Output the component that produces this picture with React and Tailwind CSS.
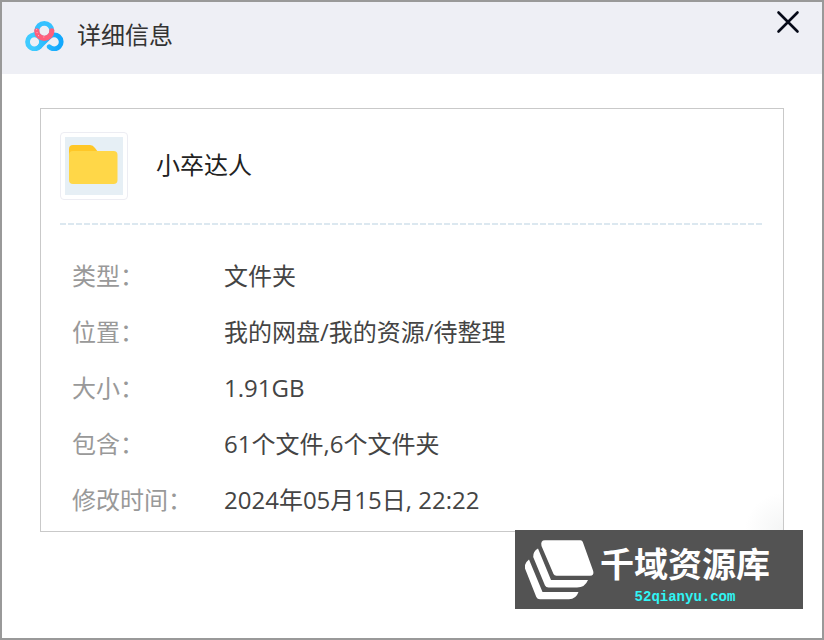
const details = [
  { label: "类型：", value: "文件夹" },
  { label: "位置：", value: "我的网盘/我的资源/待整理" },
  { label: "大小：", value: "1.91GB" },
  { label: "包含：", value: "61个文件,6个文件夹" },
  { label: "修改时间：", value: "2024年05月15日, 22:22" },
];

function CloudLogo() {
  return (
    <svg width="40" height="32" viewBox="0 0 40 32" fill="none" strokeWidth="4.8" strokeLinecap="round" aria-hidden="true">
      <defs>
        <linearGradient id="cloud" x1="0" y1="0" x2="40" y2="0" gradientUnits="userSpaceOnUse">
          <stop offset="0.2" stopColor="#3fcbff" />
          <stop offset="0.85" stopColor="#12a8fd" />
        </linearGradient>
      </defs>
      <circle cx="19.3" cy="11.8" r="7.5" stroke="#35c1ff" />
      <path
        stroke="url(#cloud)"
        d="M14.5 17.9A7 7 0 1 0 14.6 27.7L23.8 18.4A7 7 0 1 1 24.2 27.8"
      />
      <path stroke="url(#cloud)" d="M9.5 15.7A7 7 0 0 1 16.5 22.7A7 7 0 0 1 14.6 27.7" />
      <path stroke="#ff5f7c" strokeWidth="5.2" d="M11.8 11.9A7.5 7.5 0 0 0 26.8 11.9" />
      <path stroke="#ffc2cc" strokeWidth="1" d="M12 13.6h.1M13.4 16.6h.1M18.8 18h.1M11.6 10.6h.1" />
    </svg>
  );
}

function FolderThumb() {
  return (
    <div className="size-17 shrink-0 rounded-sm border border-[#ededf3] bg-white p-1">
      <svg className="size-full" viewBox="0 0 58 58" aria-hidden="true">
        <rect width="58" height="58" fill="#e6eff5" />
        <path d="M4 22V12q0-4 4-4h17q3 0 5 3l3 4v7z" fill="#ffc727" />
        <rect x="4" y="14" width="48.5" height="33" rx="4" fill="#ffd748" />
      </svg>
    </div>
  );
}

function Watermark() {
  return (
    <a
      href="#"
      className="absolute right-[19px] bottom-[29px] flex w-72 bg-[#535353] pt-[10px] pb-1 pl-[10px]"
    >
      <svg width="70" height="60" viewBox="10 10 70 60" fill="#fff" aria-hidden="true">
        <path d="M30 10.3H65.5Q67.2 10.3 67.8 12L78.2 41Q79.4 45.7 75 45.7H41.5Q39.3 45.7 38.5 44L26.5 16Q25.2 10.3 30 10.3Z" />
        <path d="M23 18.5Q18 21 18.2 27L30 55.5Q31 57.5 33.5 57.5H62Q70 57.5 73 50H36Z" />
        <path d="M14 29.5Q9.3 33 9.8 38L21.3 67Q22.3 69.2 25 69.2H54Q61 69.2 63.5 62H27.5Z" />
      </svg>
      <div className="ml-[5px] flex flex-col items-center">
        <span className="mt-[5px] font-['Noto_Sans_CJK_SC',sans-serif] text-[34px] leading-9 font-bold text-white">
          千域资源库
        </span>
        <span className="mt-2 font-['Liberation_Mono',monospace] text-sm leading-4 font-bold text-[#2ff5f5]">
          52qianyu.com
        </span>
      </div>
    </a>
  );
}

export default function App() {
  return (
    <div
      lang="zh-CN"
      className="relative min-h-screen border-2 border-[#999] bg-white font-['Open_Sans','Noto_Sans_CJK_SC',sans-serif] text-2xl font-[380] text-[#444]"
    >
      <header className="flex h-18 items-start justify-between bg-[#eeeff5] pr-[21px] pl-[23px]">
        <div className="mt-[15px] flex items-center gap-3">
          <CloudLogo />
          <h1 className="leading-9 text-[#333]">详细信息</h1>
        </div>
        <button type="button" aria-label="关闭" className="mt-2 cursor-pointer text-[#060a18]">
          <svg width="26" height="24" viewBox="0 0 26 24" stroke="currentColor" strokeWidth="2.6" strokeLinecap="round">
            <path d="M3.5 2.5l19 19M22.5 2.5l-19 19" />
          </svg>
        </button>
      </header>

      <main className="mx-[38px] mt-[34px] border border-[#c9c9c9] bg-[radial-gradient(circle_at_bottom_right,#f4f5f5,#ffffff_38px)] pr-[21px] pb-[3px] pl-[19px]">
        <div className="flex items-center gap-7 py-[23px]">
          <FolderThumb />
          <h2 className="pb-[2px] text-[#222]">小卒达人</h2>
        </div>
        <div className="h-[2px] bg-[repeating-linear-gradient(to_right,#dce8f0_0px,#dce8f0_6px,transparent_6px,transparent_8px)]" />
        <dl className="mt-[23px] pl-3">
          {details.map(({ label, value }) => (
            <div key={label} className="flex h-14 items-center">
              <dt className="w-38 shrink-0 text-[#999]">{label}</dt>
              <dd>{value}</dd>
            </div>
          ))}
        </dl>
      </main>

      <Watermark />
    </div>
  );
}
